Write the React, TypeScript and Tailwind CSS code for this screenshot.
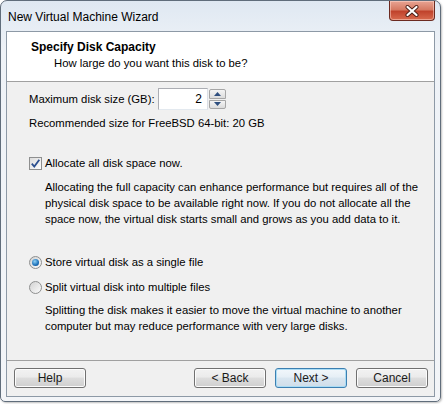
import React from 'react';

const font = { fontFamily: '"Liberation Sans", Arial, sans-serif' };

function WinButton({ label, primary }: { label: string; primary?: boolean }): React.ReactElement {
  return (
    <button
      className={
        'w-[72px] h-[20px] rounded-[3px] border text-[12px] leading-none text-[#1a1a1a] flex items-center justify-center ' +
        (primary
          ? 'border-[#3c7fb1] bg-[linear-gradient(#f2f7fb_0%,#e6eff6_45%,#d9e6f0_50%,#cfdde9_100%)] shadow-[inset_0_0_0_1px_#a9dcf5]'
          : 'border-[#707070] bg-[linear-gradient(#f2f2f2_0%,#ebebeb_45%,#dddddd_50%,#cfcfcf_100%)] shadow-[inset_0_0_0_1px_#fcfcfc]')
      }
    >
      {label}
    </button>
  );
}

function CheckBox(): React.ReactElement {
  return (
    <div className="w-[13px] h-[13px] shrink-0 border border-[#8e8f8f] bg-[linear-gradient(135deg,#dcdcdc,#fdfdfd)] flex items-center justify-center">
      <svg width="11" height="11" viewBox="0 0 11 11" fill="none">
        <path d="M1.8 5.6 L4.3 8.6 L9.3 1.8" stroke="#2b4f8f" strokeWidth="1.8" />
      </svg>
    </div>
  );
}

function Radio({ checked }: { checked?: boolean }): React.ReactElement {
  return (
    <div className="w-[13px] h-[13px] shrink-0 rounded-full border border-[#8e8f8f] bg-[linear-gradient(135deg,#d2d2d2,#fbfbfb)] flex items-center justify-center">
      {checked && (
        <div className="w-[7px] h-[7px] rounded-full bg-[radial-gradient(circle_at_40%_35%,#8fd1f5,#1b6fb8_60%,#0d3e78)]" />
      )}
    </div>
  );
}

export default function App(): React.ReactElement {
  return (
    <div className="w-[444px] h-[404px] overflow-hidden bg-white text-[11.3px] text-black whitespace-nowrap" style={font}>
      <div className="w-[441px] h-[402px] rounded-t-[7px] rounded-b-[5px] border border-[#606d7b] bg-[linear-gradient(#dfe8f2_0%,#eef2f7_12%,#f3f5f8_100%)] flex flex-col shadow-[1px_1px_2px_rgba(0,0,0,0.25)]">
        {/* title bar */}
        <div className="h-[30px] flex items-start justify-between pl-[7px] pr-[5px] shrink-0">
          <span className="mt-[8px] text-[12px] leading-[16px]">New Virtual Machine Wizard</span>
          <div className="w-[46px] h-[20px] rounded-b-[4px] border border-t-0 border-[#6b2a20] bg-[linear-gradient(#e8a493_0%,#d67a63_45%,#c0432c_55%,#d86a4e_100%)] flex items-center justify-center shadow-[inset_0_0_0_1px_rgba(255,220,210,0.5)]">
            <svg width="14" height="12" viewBox="0 0 14 12">
              <path d="M2.5 2 L11.5 10 M11.5 2 L2.5 10" stroke="#4a1e16" strokeWidth="4" strokeLinecap="round" />
              <path d="M2.5 2 L11.5 10 M11.5 2 L2.5 10" stroke="#ffffff" strokeWidth="2.2" strokeLinecap="round" />
            </svg>
          </div>
        </div>

        {/* client area */}
        <div className="mx-[5px] h-[366px] border border-[#8d99a6] flex flex-col bg-[#f0f0f0]">
          <div className="h-[50px] shrink-0 bg-white border-b border-[#a0a0a0] pt-[7px]">
            <div className="pl-[24px] font-bold text-[12px] leading-[16px]">Specify Disk Capacity</div>
            <div className="pl-[47px] leading-[16px]">How large do you want this disk to be?</div>
          </div>

          <div className="flex-1 flex flex-col pl-[22px]">
            <div className="mt-[6px] h-[22px] flex items-center">
              <span className="w-[129px] leading-[16px]">Maximum disk size (GB):</span>
              <div className="w-[50px] h-[22px] border border-[#abadb3] border-r-[#dbdfe6] border-b-[#e3e9ef] bg-white flex items-center justify-end pr-[5px] text-[12px]">
                2
              </div>
              <div className="ml-[1px] w-[17px] h-[20px] flex flex-col gap-[1px]">
                <div className="flex-1 rounded-t-[2px] border border-[#a6a6a6] bg-[linear-gradient(#f4f4f4,#dcdcdc)] flex items-center justify-center">
                  <svg width="7" height="4" viewBox="0 0 7 4"><path d="M0 4 L3.5 0 L7 4 Z" fill="#2e4e7e" /></svg>
                </div>
                <div className="flex-1 rounded-b-[2px] border border-[#a6a6a6] bg-[linear-gradient(#f4f4f4,#dcdcdc)] flex items-center justify-center">
                  <svg width="7" height="4" viewBox="0 0 7 4"><path d="M0 0 L3.5 4 L7 0 Z" fill="#2e4e7e" /></svg>
                </div>
              </div>
            </div>

            <div className="mt-[5px] leading-[16px]">Recommended size for FreeBSD 64-bit: 20 GB</div>

            <div className="mt-[24px] h-[16px] flex items-center gap-[3px]">
              <CheckBox />
              <span className="leading-[16px]">Allocate all disk space now.</span>
            </div>

            <div className="mt-[8px] pl-[16px] leading-[16px]">
              Allocating the full capacity can enhance performance but requires all of the
              <br />
              physical disk space to be available right now. If you do not allocate all the
              <br />
              space now, the virtual disk starts small and grows as you add data to it.
            </div>

            <div className="mt-[27px] h-[16px] flex items-center gap-[3px]">
              <Radio checked />
              <span className="leading-[16px]">Store virtual disk as a single file</span>
            </div>

            <div className="mt-[9px] h-[16px] flex items-center gap-[3px]">
              <Radio />
              <span className="leading-[16px]">Split virtual disk into multiple files</span>
            </div>

            <div className="mt-[7px] pl-[16px] leading-[16px]">
              Splitting the disk makes it easier to move the virtual machine to another
              <br />
              computer but may reduce performance with very large disks.
            </div>
          </div>

          <div className="h-[36px] shrink-0 border-t border-[#a0a0a0] pt-[7px] pl-[7px] pr-[6px] flex items-start">
            <WinButton label="Help" />
            <div className="flex-1" />
            <div className="flex gap-[9px]">
              <WinButton label="< Back" />
              <WinButton label="Next >" primary />
              <WinButton label="Cancel" />
            </div>
          </div>
        </div>
      </div>
    </div>
  );
}
